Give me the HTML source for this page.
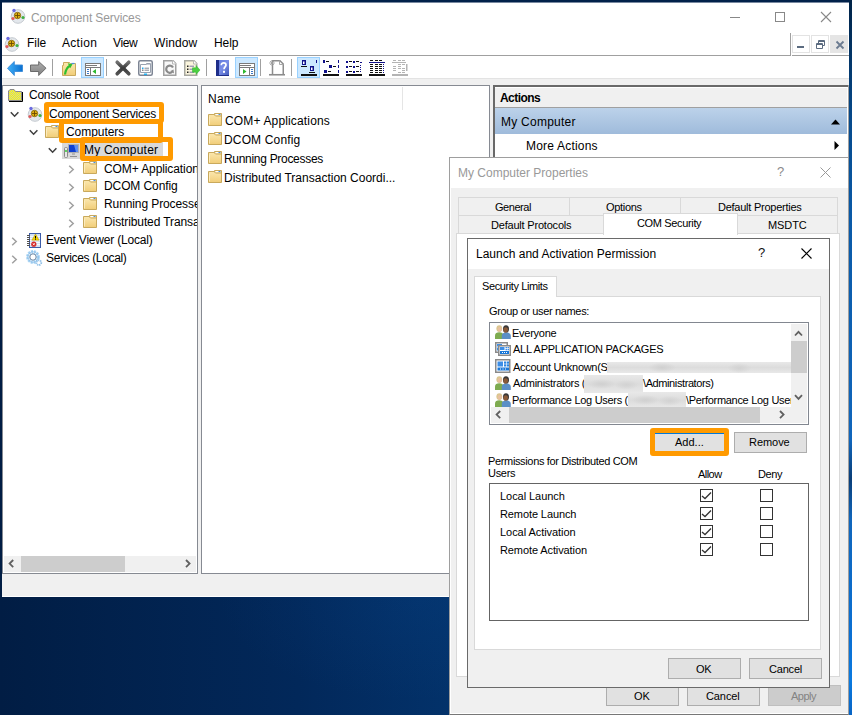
<!DOCTYPE html>
<html><head><meta charset="utf-8">
<style>
*{box-sizing:border-box}
html,body{margin:0;padding:0}
body{width:852px;height:715px;overflow:hidden;position:relative;background:radial-gradient(ellipse 200px 100px at 420px 600px,rgba(10,70,140,0.22),rgba(10,70,140,0)),linear-gradient(90deg,#011d44 0%,#02285a 35%,#03336c 55%,#04427f 100%);font-family:"Liberation Sans",sans-serif;}
.a{position:absolute}
.t{position:absolute;white-space:nowrap;font-size:12px;line-height:12px;color:#000}
.s{position:absolute;white-space:nowrap;font-size:11px;line-height:11px;color:#000}
.box{position:absolute;border:1px solid #828790;background:#fff}
.btn{position:absolute;border:1px solid #adadad;background:#e1e1e1}
.org{position:absolute;border:5px solid #ff9a00;border-radius:3px}
.cb{position:absolute;width:13px;height:13px;border:1px solid #333;background:#fff}
svg{position:absolute;overflow:visible}
.blur{background:radial-gradient(ellipse 14px 5px at 30% 50%,#d0d0d0,rgba(215,215,215,0)),radial-gradient(ellipse 12px 5px at 72% 55%,#d2d2d2,rgba(215,215,215,0)),linear-gradient(#e8e8e8,#dcdcdc 50%,#e8e8e8)}

</style></head><body>

<div class="a" style="left:849px;top:0;width:3px;height:715px;background:linear-gradient(#012347 0px,#02305e 40px,#064a8c 120px,#0a5aa8 220px,#1066bc 440px,#0a3e78 478px,#1066bc 520px,#0a70d4 640px,#0a7ae0 680px,#0864c4 715px)"></div>
<div class="a" style="left:0;top:0;width:849px;height:2px;background:#01214a"></div>
<!-- ============ MAIN WINDOW ============ -->
<div class="a" style="left:2px;top:2px;width:847px;height:1px;background:#7888a0"></div>
<div class="a" style="left:2px;top:3px;width:847px;height:594px;background:#fff"></div>
<!-- title -->
<div class="t" style="left:31px;top:12px;color:#999;letter-spacing:-0.1px">Component Services</div>
<!-- caption buttons -->
<div class="a" style="left:730px;top:17px;width:10px;height:1px;background:#888"></div>
<div class="a" style="left:775px;top:12px;width:10px;height:10px;border:1px solid #888"></div>
<svg style="left:821px;top:12px" width="10" height="10"><path d="M0 0L10 10M10 0L0 10" stroke="#888" stroke-width="1.1"/></svg>

<!-- menu -->
<div class="t" style="left:27px;top:37px;letter-spacing:-0.05px">File</div>
<div class="t" style="left:62px;top:37px;letter-spacing:0.3px">Action</div>
<div class="t" style="left:113px;top:37px;letter-spacing:-0.35px">View</div>
<div class="t" style="left:154px;top:37px;letter-spacing:0.1px">Window</div>
<div class="t" style="left:214px;top:37px;letter-spacing:-0.05px">Help</div>
<div class="a" style="left:2px;top:55px;width:789px;height:1px;background:#a0a0a0"></div>
<div class="a" style="left:790px;top:33px;width:1px;height:23px;background:#a0a0a0"></div>
<div class="a" style="left:792px;top:55px;width:57px;height:1px;background:#a0a0a0"></div>
<div class="a" style="left:792px;top:35px;width:18px;height:18px;border:1px solid #e3e3e3"></div>
<div class="a" style="left:811px;top:35px;width:18px;height:18px;border:1px solid #e3e3e3"></div>
<div class="a" style="left:830px;top:35px;width:18px;height:18px;background:#e5e5e5"></div>

<!-- toolbar band -->
<div class="a" style="left:2px;top:78px;width:847px;height:1px;background:#e3e3e3"></div>
<div class="a" style="left:2px;top:79px;width:847px;height:518px;background:#f0f0f0"></div>

<!-- tree pane -->
<div class="box" style="left:2px;top:85px;width:196px;height:489px;border-color:#868a92"></div>
<!-- list pane -->
<div class="box" style="left:201px;top:85px;width:289px;height:489px;border-color:#868a92"></div>
<!-- actions pane -->
<div class="a" style="left:493px;top:85px;width:356px;height:488px;background:#fff;border-top:2px solid #696969;border-left:2px solid #696969"></div>
<div class="a" style="left:495px;top:87px;width:352px;height:20px;background:#f0f0f0"></div>
<div class="a" style="left:495px;top:87px;width:352px;height:1px;background:#fff"></div>
<div class="a" style="left:495px;top:107px;width:352px;height:1px;background:#a0a0a0"></div>
<div class="a" style="left:495px;top:108px;width:352px;height:26px;background:linear-gradient(#bcd2ea,#9fbbdb)"></div>
<div class="a" style="left:847px;top:87px;width:1px;height:70px;background:#fff"></div>
<div class="a" style="left:848px;top:85px;width:1px;height:72px;background:#a0a0a0"></div>


<!-- symbols -->
<svg width="0" height="0" style="position:absolute">
<defs>
<linearGradient id="gFold" x1="0" y1="0" x2="0" y2="1"><stop offset="0" stop-color="#fbe7ae"/><stop offset="1" stop-color="#f1cd78"/></linearGradient>
<linearGradient id="gBlue" x1="0" y1="0" x2="1" y2="0"><stop offset="0" stop-color="#40b0f8"/><stop offset="1" stop-color="#0a6fd0"/></linearGradient>
<linearGradient id="gGray" x1="0" y1="0" x2="0" y2="1"><stop offset="0" stop-color="#b0b0b0"/><stop offset="1" stop-color="#808080"/></linearGradient>
<symbol id="folder" viewBox="0 0 14 13"><path d="M6.5 2.5V0.5H13.5V3" fill="#f6dc98" stroke="#c9a95c"/><path d="M7.5 1.5H12.5" stroke="#fff"/><path d="M10.5 1.5H12.5" stroke="#4a90e0"/><path d="M0.5 12.5V1.5H6L7.5 3H13.5V12.5Z" fill="url(#gFold)" stroke="#c9a95c"/><path d="M1.5 3.5V11.5" stroke="#fdf0c8" stroke-width="0.8"/></symbol>
<symbol id="comsvc" viewBox="0 0 16 16"><circle cx="8" cy="8.5" r="6.8" fill="#e3e7ec" stroke="#c4c9cf"/><circle cx="7.5" cy="7.5" r="3.2" fill="#e0b010" stroke="#7a5a00" stroke-width="0.8"/><path d="M7.5 5V10M5 7.5H10" stroke="#6b4a00" stroke-width="0.9"/><circle cx="4" cy="2.5" r="1.7" fill="#6a6ae0"/><circle cx="3" cy="10.5" r="1.6" fill="#e05a5a"/><circle cx="13" cy="9.5" r="1.6" fill="#40b040"/></symbol>
<symbol id="people" viewBox="0 0 16 14"><path d="M0 14V10.5C0 8.2 1.8 7.2 4.2 7.2S8.4 8.2 8.4 10.5V14Z" fill="#7eab50"/><ellipse cx="4.3" cy="3.6" rx="2.9" ry="3.4" fill="#dcc690"/><ellipse cx="4.8" cy="4.3" rx="2" ry="2.4" fill="#e8c0a0"/><path d="M6.8 14V10.8C6.8 8.6 8.6 7.6 11.3 7.6S15.8 8.6 15.8 10.8V14Z" fill="#5b8fc6"/><ellipse cx="11" cy="3.9" rx="3" ry="3.6" fill="#3a3838"/><ellipse cx="10.7" cy="4.9" rx="2.3" ry="2.6" fill="#8a5a38"/></symbol>
<symbol id="pkg" viewBox="0 0 16 14"><rect x="0.75" y="0.75" width="11.5" height="9.5" fill="#fff" stroke="#8a8a8a" stroke-width="1.5"/><rect x="2" y="2" width="5" height="2.5" fill="#3d8ee6"/><rect x="2" y="5.5" width="1" height="3" fill="#3d8ee6"/><rect x="3.75" y="3.75" width="11.5" height="9.5" fill="#fff" stroke="#8a8a8a" stroke-width="1.5"/><rect x="5" y="5" width="4.5" height="3" fill="#3d8ee6"/><rect x="10.5" y="5" width="1.5" height="1.3" fill="#3d8ee6"/><rect x="12.5" y="5" width="1.5" height="1.3" fill="#3d8ee6"/><rect x="10.5" y="7" width="1.5" height="1.3" fill="#3d8ee6"/><rect x="12.5" y="7" width="1.5" height="1.3" fill="#3d8ee6"/><rect x="5" y="9" width="9" height="3" fill="#1a78d8"/><path d="M7 10.5H8M9 10.5H10M11 10.5H12" stroke="#fff"/></symbol>
<symbol id="unk" viewBox="0 0 16 14"><rect x="0.75" y="0.75" width="14" height="12.5" fill="#fff" stroke="#8a8a8a" stroke-width="1.5"/><rect x="2.5" y="2.5" width="5.5" height="5" fill="#3d8ee6"/><rect x="9" y="2.5" width="2.2" height="2.2" fill="#2a84e0"/><rect x="11.8" y="2.5" width="2.2" height="2.2" fill="#2a84e0"/><rect x="9" y="5.3" width="2.2" height="2.2" fill="#2a84e0"/><rect x="11.8" y="5.3" width="2.2" height="2.2" fill="#2a84e0"/><rect x="2.5" y="8.5" width="11.5" height="3" fill="#1a78d8"/><path d="M5 10H6M7.5 10H8.5M10 10H11" stroke="#fff"/></symbol>
</defs></svg>

<!-- title icon / menu icon -->
<svg style="left:10px;top:8px" width="16" height="16"><use href="#comsvc"/></svg>
<svg style="left:4px;top:36px" width="16" height="16"><use href="#comsvc"/></svg>
<!-- mdi glyphs -->
<div class="a" style="left:797px;top:46px;width:7px;height:2px;background:#5b6b80"></div>
<svg style="left:816px;top:40px" width="9" height="9"><path d="M0.5 3.5H6.5V8.5H0.5ZM0.5 4.5H6.5M2.5 3.5V0.5H8.5V5.5H6.5M2.5 1.5H8.5" fill="none" stroke="#5b6b80"/></svg>
<svg style="left:836px;top:41px" width="8" height="8"><path d="M0.5 0.5L7.5 7.5M7.5 0.5L0.5 7.5" stroke="#6b7b90" stroke-width="1.8"/></svg>

<!-- toolbar -->
<svg style="left:7px;top:61px" width="17" height="16"><path d="M0.5 7.2L7.3 0.5V4H15.5V10.5H7.3V14.5Z" fill="url(#gBlue)" stroke="#3a8ad8" stroke-width="0.9"/></svg>
<svg style="left:30px;top:61px" width="17" height="16"><path d="M16 7.2L8.7 0.5V4H0.5V10.5H8.7V14.5Z" fill="url(#gGray)" stroke="#606060" stroke-width="0.9"/></svg>
<div class="a" style="left:52px;top:59px;width:1px;height:17px;background:#a0a0a0"></div>
<svg style="left:62px;top:61px" width="15" height="16"><path d="M0.5 4.5V14.5H13.5V2.5H8.5L7.5 1.5H1.5V4.5Z" fill="url(#gFold)" stroke="#c9a95c"/><path d="M9.5 2.5H12.5" stroke="#4a90e0" stroke-width="1.2"/><path d="M3 13.5C3.5 9 5 6.5 8 4.8" stroke="#2ec02e" stroke-width="2.2" fill="none"/><path d="M5.8 2.2L10.5 3.2L8.2 7.2Z" fill="#2ec02e"/></svg>
<div class="a" style="left:81px;top:57px;width:23px;height:21px;background:#cce8ff;border:1px solid #99d1ff"></div>
<svg style="left:85px;top:63px" width="16" height="13"><rect x="0.5" y="0.5" width="15" height="12" fill="#fff" stroke="#7a7a7a"/><path d="M1 2.5H12M1 4.5H15" stroke="#7a7a7a"/><path d="M5.5 5V12.5" stroke="#7a7a7a"/><path d="M2 6.5H4M2 8.5H4M2 10.5H4" stroke="#3a78c8" stroke-width="1.2"/><path d="M11 6L7.5 8.5L11 11Z" fill="#2eb82e"/></svg>
<div class="a" style="left:106px;top:59px;width:1px;height:17px;background:#a0a0a0"></div>
<svg style="left:114px;top:59px" width="18" height="18"><defs><linearGradient id="gX" x1="0" y1="0" x2="0" y2="1"><stop offset="0" stop-color="#707070"/><stop offset="0.5" stop-color="#3a3a3a"/><stop offset="1" stop-color="#505050"/></linearGradient></defs><path d="M3.2 3.2L14.8 14.8M14.8 3.2L3.2 14.8" stroke="url(#gX)" stroke-width="3.6" stroke-linecap="round"/></svg>
<svg style="left:138px;top:60px" width="16" height="16"><rect x="0.75" y="0.75" width="13.5" height="14.5" rx="1.5" fill="#fff" stroke="#7d8594" stroke-width="1.5"/><path d="M2.5 4.5H8.5V3.5H12.5V12.5H2.5Z" fill="#fff" stroke="#9aa2b0"/><rect x="9" y="4" width="3" height="1" fill="#c8ccd4"/><rect x="4" y="7.5" width="1.5" height="1.5" fill="#20a8f0"/><rect x="4" y="9.5" width="1.5" height="1.5" fill="#888"/><path d="M6.5 8.2H11M6.5 10.2H11" stroke="#808894"/><rect x="6" y="13.5" width="3" height="1.5" fill="#20b0f0"/></svg>
<svg style="left:163px;top:60px" width="14" height="16"><path d="M0.75 0.75H10L12.75 3.5V15.25H0.75Z" fill="#f8f8f8" stroke="#a0a0a0" stroke-width="1.5"/><path d="M9.5 0.5V4H13" fill="#fff" stroke="#b8b8b8"/><path d="M10 7.5A3.6 3.6 0 1 0 9.3 11.8" fill="none" stroke="#8a8a8a" stroke-width="2.2"/><path d="M7.5 11L11 13.5L10.5 9.5Z" fill="#8a8a8a"/></svg>
<svg style="left:184px;top:60px" width="17" height="16"><path d="M0.75 0.75H10L12.75 3.5V15.25H0.75Z" fill="#fbf5dc" stroke="#a8a8a0" stroke-width="1.5"/><path d="M9.5 0.5V4H13" fill="#fff" stroke="#b8b8b0"/><rect x="3" y="5.5" width="1.5" height="1.5" fill="#222"/><rect x="3" y="8.5" width="1.5" height="1.5" fill="#222"/><rect x="3" y="11.5" width="1.5" height="1.5" fill="#222"/><path d="M5.5 6.2H10M5.5 9.2H10M5.5 12.2H10" stroke="#7a78a8"/><path d="M8.5 7.8H12V5.5L16 10L12 14.5V12.2H8.5Z" fill="#4cd040" stroke="#30b030" stroke-width="0.5"/></svg>
<div class="a" style="left:206px;top:59px;width:1px;height:17px;background:#a0a0a0"></div>
<svg style="left:216px;top:60px" width="13" height="16"><defs><linearGradient id="gHelp" x1="0" y1="0" x2="1" y2="1"><stop offset="0" stop-color="#5a74d8"/><stop offset="0.5" stop-color="#7a8ee8"/><stop offset="1" stop-color="#4058b8"/></linearGradient></defs><rect x="0" y="0" width="13" height="16" fill="url(#gHelp)"/><rect x="0" y="0" width="3" height="16" fill="#1e2e8a"/><rect x="0" y="15" width="13" height="1" fill="#1e2e8a"/><path d="M5.3 5.2C5.3 3.6 6.4 2.8 7.7 2.8S10 3.6 10 5C10 6.8 8 7 8 9.2" fill="none" stroke="#fff" stroke-width="1.7"/><rect x="7" y="10.8" width="2" height="2" fill="#fff"/></svg>
<div class="a" style="left:235px;top:57px;width:23px;height:21px;background:#cce8ff;border:1px solid #99d1ff"></div>
<svg style="left:239px;top:63px" width="16" height="13"><rect x="0.5" y="0.5" width="15" height="12" fill="#fff" stroke="#7a7a7a"/><path d="M1 2.5H12M1 4.5H15" stroke="#7a7a7a"/><path d="M10.5 5V12.5" stroke="#7a7a7a"/><path d="M12 6.5H14M12 8.5H14M12 10.5H14" stroke="#3a78c8" stroke-width="1.2"/><path d="M4 6L7.5 8.5L4 11Z" fill="#2eb82e"/></svg>
<div class="a" style="left:260px;top:59px;width:1px;height:17px;background:#a0a0a0"></div>
<svg style="left:269px;top:60px" width="17" height="16"><path d="M3.5 14V0.75H11L14.25 4V14" fill="#fff" stroke="#8c8c8c" stroke-width="1.5"/><path d="M10.5 0.5V4.5H14.5" fill="none" stroke="#a8a8a8"/><path d="M0 14.75H16" stroke="#8c8c8c" stroke-width="1.6"/><path d="M1 1L5 5M5 1L1 5M3 0V6M0 3H6" stroke="#a0a0a0" stroke-width="0.8"/></svg>
<div class="a" style="left:291px;top:59px;width:1px;height:17px;background:#a0a0a0"></div>
<div class="a" style="left:297px;top:57px;width:23px;height:21px;background:#cce8ff;border:1px solid #99d1ff"></div>
<svg style="left:301px;top:60px" width="16" height="16"><rect x="1" y="0" width="4" height="5" fill="#10108a"/><rect x="2" y="1.5" width="1.5" height="2.5" fill="#fff"/><rect x="0" y="6" width="6" height="1" fill="#111"/><rect x="9" y="6" width="4" height="5" fill="#10108a"/><rect x="10" y="7.5" width="1.5" height="2.5" fill="#fff"/><rect x="8" y="12" width="6" height="1" fill="#111"/><rect x="15" y="0" width="1" height="3" fill="#10108a"/><rect x="0" y="14" width="16" height="2" fill="#111"/></svg>
<svg style="left:323px;top:60px" width="16" height="16"><g fill="#10108a"><rect x="0" y="0" width="2" height="3"/><rect x="6" y="5" width="3" height="3"/><rect x="1" y="10" width="3" height="3"/><rect x="15" y="0" width="1" height="3"/><rect x="15" y="5" width="1" height="3"/><rect x="15" y="10" width="1" height="3"/></g><g fill="#111"><rect x="3" y="1" width="3" height="1"/><rect x="10" y="6" width="3" height="1"/><rect x="5" y="11" width="3" height="1"/><rect x="0" y="14" width="16" height="2"/></g></svg>
<svg style="left:346px;top:60px" width="16" height="16"><g fill="#10108a"><rect x="0" y="1" width="2" height="2"/><rect x="7" y="1" width="2" height="2"/><rect x="0" y="6" width="2" height="2"/><rect x="7" y="6" width="2" height="2"/><rect x="0" y="11" width="2" height="2"/><rect x="7" y="11" width="2" height="2"/><rect x="14" y="2" width="2" height="1"/><rect x="14" y="5" width="1" height="1"/><rect x="14" y="7" width="1" height="1"/><rect x="14" y="9" width="1" height="1"/><rect x="14" y="11" width="1" height="1"/></g><g fill="#111"><rect x="3" y="1" width="3" height="1"/><rect x="10" y="1" width="3" height="1"/><rect x="3" y="6" width="3" height="1"/><rect x="10" y="6" width="3" height="1"/><rect x="3" y="11" width="3" height="1"/><rect x="10" y="11" width="3" height="1"/><rect x="0" y="14" width="16" height="2"/></g></svg>
<svg style="left:369px;top:60px" width="16" height="16"><g fill="#111"><rect x="1" y="0" width="3" height="1"/><rect x="6" y="0" width="3" height="1"/><rect x="10" y="0" width="3" height="1"/><rect x="1" y="4" width="3" height="1"/><rect x="6" y="4" width="3" height="1"/><rect x="10" y="4" width="3" height="1"/><rect x="1" y="6" width="3" height="1"/><rect x="6" y="6" width="3" height="1"/><rect x="10" y="6" width="3" height="1"/><rect x="1" y="8" width="3" height="1"/><rect x="6" y="8" width="3" height="1"/><rect x="10" y="8" width="3" height="1"/><rect x="1" y="10" width="3" height="1"/><rect x="6" y="10" width="3" height="1"/><rect x="10" y="10" width="3" height="1"/><rect x="1" y="12" width="3" height="1"/><rect x="6" y="12" width="3" height="1"/><rect x="10" y="12" width="3" height="1"/><rect x="0" y="14" width="16" height="2"/></g><g fill="#10108a"><rect x="0" y="2" width="16" height="1"/><rect x="14" y="4" width="1" height="1"/><rect x="14" y="6" width="1" height="1"/><rect x="14" y="8" width="1" height="1"/><rect x="14" y="10" width="1" height="1"/><rect x="14" y="12" width="1" height="1"/></g></svg>
<svg style="left:392px;top:60px" width="16" height="16"><g fill="#b4b4b4"><rect x="1" y="0" width="3" height="1"/><rect x="6" y="0" width="3" height="1"/><rect x="10" y="0" width="3" height="1"/><rect x="0" y="2" width="14" height="1"/><rect x="6" y="4" width="3" height="1"/><rect x="10" y="4" width="3" height="1"/><rect x="1" y="6" width="3" height="1"/><rect x="6" y="6" width="3" height="1"/><rect x="1" y="8" width="3" height="1"/><rect x="6" y="8" width="3" height="1"/><rect x="10" y="8" width="3" height="1"/><rect x="1" y="10" width="3" height="1"/><rect x="10" y="10" width="3" height="1"/><rect x="6" y="12" width="3" height="1"/><rect x="10" y="12" width="3" height="1"/><rect x="14" y="4" width="1.5" height="7"/><rect x="0" y="14" width="16" height="2"/></g></svg>

<div class="a" style="left:3px;top:86px;width:194px;height:486px;overflow:hidden"><div class="a" style="left:-3px;top:-86px;width:852px;height:715px">
<!-- tree content -->
<svg style="left:8px;top:89px" width="15" height="13"><defs><pattern id="pDot" width="2" height="2" patternUnits="userSpaceOnUse"><rect width="2" height="2" fill="#ffff00"/><rect x="1" y="0" width="1" height="1" fill="#c8c8a8"/><rect x="0" y="1" width="1" height="1" fill="#c8c8a8"/></pattern></defs><path d="M0.5 11.5V2L2 0.5H6L7.5 2.5H13.5V11.5Z" fill="url(#pDot)" stroke="#8a8a8a"/><path d="M14.5 3V12.5H1" stroke="#000" fill="none"/></svg>
<div class="t" style="left:29px;top:89px;letter-spacing:-0.25px">Console Root</div>

<svg style="left:10px;top:111px" width="10" height="7"><path d="M0.8 1.2L4.6 5.2L8.4 1.2" stroke="#404040" stroke-width="1.5" fill="none"/></svg>
<svg style="left:27px;top:106px" width="16" height="16"><use href="#comsvc"/></svg>
<div class="t" style="left:49px;top:108px;letter-spacing:-0.25px">Component Services</div>

<svg style="left:29px;top:129px" width="10" height="7"><path d="M0.8 1.2L4.6 5.2L8.4 1.2" stroke="#404040" stroke-width="1.5" fill="none"/></svg>
<svg style="left:45px;top:125px" width="14" height="13"><use href="#folder"/></svg>
<div class="t" style="left:66px;top:126px;letter-spacing:-0.05px">Computers</div>

<div class="a" style="left:62px;top:142px;width:101px;height:17px;background:#d9d9d9"></div>
<svg style="left:48px;top:147px" width="10" height="7"><path d="M0.8 1.2L4.6 5.2L8.4 1.2" stroke="#404040" stroke-width="1.5" fill="none"/></svg>
<svg style="left:63px;top:144px" width="17" height="14"><rect x="1.5" y="3.5" width="3" height="10" rx="1" fill="#e8e8e8" stroke="#8a8a8a"/><path d="M3 6V8" stroke="#30d030" stroke-width="1.5"/><rect x="5.5" y="0.5" width="10" height="8" fill="#1040d0" stroke="#b0b0b0"/><path d="M11 1H15V8L13 8Z" fill="#80b0ff" opacity="0.7"/><path d="M9 10H12M7 12.5H14" stroke="#909090"/></svg>
<div class="t" style="left:84px;top:144px;letter-spacing:0.2px">My Computer</div>

<svg style="left:68px;top:165px" width="7" height="9"><path d="M1.2 0.8L5.2 4.5L1.2 8.2" stroke="#a0a0a0" stroke-width="1.5" fill="none"/></svg>
<svg style="left:83px;top:161px" width="14" height="13"><use href="#folder"/></svg>
<div class="t" style="left:104px;top:163px;letter-spacing:-0.1px">COM+ Applications</div>
<svg style="left:68px;top:183px" width="7" height="9"><path d="M1.2 0.8L5.2 4.5L1.2 8.2" stroke="#a0a0a0" stroke-width="1.5" fill="none"/></svg>
<svg style="left:83px;top:179px" width="14" height="13"><use href="#folder"/></svg>
<div class="t" style="left:104px;top:180px;letter-spacing:-0.1px">DCOM Config</div>
<svg style="left:68px;top:201px" width="7" height="9"><path d="M1.2 0.8L5.2 4.5L1.2 8.2" stroke="#a0a0a0" stroke-width="1.5" fill="none"/></svg>
<svg style="left:83px;top:197px" width="14" height="13"><use href="#folder"/></svg>
<div class="t" style="left:104px;top:198px;letter-spacing:-0.1px">Running Processes</div>
<svg style="left:68px;top:219px" width="7" height="9"><path d="M1.2 0.8L5.2 4.5L1.2 8.2" stroke="#a0a0a0" stroke-width="1.5" fill="none"/></svg>
<svg style="left:83px;top:215px" width="14" height="13"><use href="#folder"/></svg>
<div class="t" style="left:104px;top:216px;letter-spacing:-0.1px">Distributed Transaction Coordinator</div>

<svg style="left:11px;top:237px" width="7" height="9"><path d="M1.2 0.8L5.2 4.5L1.2 8.2" stroke="#a0a0a0" stroke-width="1.5" fill="none"/></svg>
<svg style="left:27px;top:233px" width="14" height="15"><rect x="2.5" y="0.5" width="11" height="14" fill="#d4e2f4" stroke="#3c5ba8"/><path d="M3 3.5H13M3 5.5H13M3 7.5H13M3 9.5H13M3 11.5H13" stroke="#fff" stroke-width="0.8"/><path d="M0 2.5H3M0 4.5H3M0 6.5H3M0 8.5H3M0 10.5H3M0 12.5H3" stroke="#505050" stroke-width="1"/><path d="M8.5 1L12.2 7.2H4.8Z" fill="#f4d400" stroke="#a88a00" stroke-width="0.5"/><path d="M8.5 3V5.5M8.5 6.2V6.8" stroke="#000" stroke-width="1"/><circle cx="6.8" cy="11.2" r="2.6" fill="#d42828"/><path d="M5.8 10.2L7.8 12.2M7.8 10.2L5.8 12.2" stroke="#fff" stroke-width="0.8"/></svg>
<div class="t" style="left:46px;top:234px;letter-spacing:-0.2px">Event Viewer (Local)</div>
<svg style="left:11px;top:255px" width="7" height="9"><path d="M1.2 0.8L5.2 4.5L1.2 8.2" stroke="#a0a0a0" stroke-width="1.5" fill="none"/></svg>
<svg style="left:26px;top:250px" width="17" height="17"><circle cx="7" cy="7" r="5.2" fill="none" stroke="#a8d4f4" stroke-width="3.4" stroke-dasharray="1.9 0.85"/><circle cx="7" cy="7" r="5.3" fill="none" stroke="#7ab0e0" stroke-width="0.6"/><circle cx="7" cy="7" r="3.2" fill="#fff" stroke="#5a7898" stroke-width="0.9"/><circle cx="12.8" cy="12.6" r="2.4" fill="#fff" stroke="#90c0e8" stroke-width="2" stroke-dasharray="1.2 0.7"/></svg>
<div class="t" style="left:46px;top:252px;letter-spacing:-0.35px">Services (Local)</div>
</div></div>
<!-- tree clip overlay right side -->

<!-- orange boxes -->
<div class="org" style="left:44px;top:102px;width:120px;height:21px;border-bottom-width:4px"></div>
<div class="org" style="left:59px;top:120px;width:104px;height:23px;border-top-width:4px"></div>
<div class="org" style="left:80px;top:137px;width:93px;height:24px"></div>

<!-- tree scrollbar -->
<div class="a" style="left:4px;top:556px;width:192px;height:16px;background:#f0f0f0"></div>
<div class="a" style="left:21px;top:556px;width:104px;height:16px;background:#cdcdcd"></div>
<svg style="left:8px;top:559px" width="7" height="10"><path d="M5.2 1L1.6 4.6L5.2 8.2" stroke="#606060" stroke-width="1.8" fill="none"/></svg>
<svg style="left:185px;top:559px" width="7" height="10"><path d="M1 1L4.6 4.6L1 8.2" stroke="#606060" stroke-width="1.8" fill="none"/></svg>

<!-- list pane -->
<div class="t" style="left:208px;top:93px;letter-spacing:0.25px">Name</div>
<div class="a" style="left:402px;top:87px;width:1px;height:23px;background:#e5e5e5"></div>
<svg style="left:208px;top:113px" width="14" height="13"><use href="#folder"/></svg>
<div class="t" style="left:225px;top:115px;letter-spacing:0.15px">COM+ Applications</div>
<svg style="left:208px;top:132px" width="14" height="13"><use href="#folder"/></svg>
<div class="t" style="left:224px;top:134px;letter-spacing:0.15px">DCOM Config</div>
<svg style="left:208px;top:151px" width="14" height="13"><use href="#folder"/></svg>
<div class="t" style="left:224px;top:153px;letter-spacing:-0.3px">Running Processes</div>
<svg style="left:208px;top:170px" width="14" height="13"><use href="#folder"/></svg>
<div class="t" style="left:224px;top:172px">Distributed Transaction Coordi...</div>

<!-- actions -->
<div class="t" style="left:500px;top:92px;font-weight:bold;letter-spacing:-0.55px">Actions</div>
<div class="t" style="left:501px;top:116px;letter-spacing:0.25px">My Computer</div>
<svg style="left:831px;top:119px" width="10" height="6"><path d="M0 5.5L4.5 0.5L9 5.5Z" fill="#000"/></svg>
<div class="t" style="left:526px;top:140px;letter-spacing:0.2px">More Actions</div>
<svg style="left:834px;top:141px" width="6" height="10"><path d="M0.5 0L5 4.5L0.5 9Z" fill="#000"/></svg>

<!-- status bar -->

<!-- status bar highlight -->
<div class="a" style="left:2px;top:596px;width:847px;height:1px;background:#fff"></div>

<!-- ============ DIALOG 1 ============ -->
<div class="a" style="left:449px;top:157px;width:400px;height:558px;background:#f0f0f0;border:1px solid rgba(60,60,60,0.45);border-bottom-color:rgba(0,0,0,0.5)"></div>
<div class="a" style="left:450px;top:158px;width:1px;height:556px;background:#fff"></div>
<div class="a" style="left:450px;top:713px;width:398px;height:1px;background:#fff"></div>
<div class="a" style="left:450px;top:158px;width:398px;height:30px;background:#fff"></div>
<div class="t" style="left:458px;top:167px;color:#999">My Computer Properties</div>
<div class="t" style="left:777px;top:166px;color:#8a8a8a;font-size:13px">?</div>
<svg style="left:820px;top:167px" width="11" height="11"><path d="M0.5 0.5L10.5 10.5M10.5 0.5L0.5 10.5" stroke="#999" stroke-width="1"/></svg>

<!-- tabs -->
<div class="a" style="left:458px;top:197px;width:380px;height:37px;background:#f0f0f0;border:1px solid #d9d9d9"></div>
<div class="a" style="left:458px;top:215px;width:380px;height:1px;background:#d9d9d9"></div>
<div class="a" style="left:569px;top:197px;width:1px;height:18px;background:#d9d9d9"></div>
<div class="a" style="left:680px;top:197px;width:1px;height:18px;background:#d9d9d9"></div>
<div class="a" style="left:603px;top:215px;width:1px;height:18px;background:#d9d9d9"></div>
<div class="a" style="left:737px;top:215px;width:1px;height:18px;background:#d9d9d9"></div>
<!-- tab panel -->
<div class="a" style="left:456px;top:233px;width:384px;height:444px;background:#fff;border:1px solid #d9d9d9"></div>
<!-- selected tab -->
<div class="a" style="left:603px;top:213px;width:135px;height:22px;background:#fff;border:1px solid #d9d9d9;border-bottom:none"></div>
<div class="s tb" style="left:495px;top:202px;letter-spacing:-0.45px">General</div>
<div class="s tb" style="left:606px;top:202px;letter-spacing:-0.3px">Options</div>
<div class="s tb" style="left:718px;top:202px;letter-spacing:-0.25px">Default Properties</div>
<div class="s tb" style="left:491px;top:220px;letter-spacing:-0.2px">Default Protocols</div>
<div class="s tb" style="left:637px;top:218px;letter-spacing:-0.35px">COM Security</div>
<div class="s tb" style="left:768px;top:220px;letter-spacing:-0.1px">MSDTC</div>

<!-- outer buttons -->
<div class="btn" style="left:606px;top:685px;width:73px;height:21px"></div>
<div class="btn" style="left:687px;top:685px;width:73px;height:21px"></div>
<div class="btn" style="left:768px;top:685px;width:73px;height:21px;background:#cccccc;border-color:#bfbfbf"></div>
<div class="s" style="left:634px;top:691px;letter-spacing:-0.1px">OK</div>
<div class="s" style="left:706px;top:691px;letter-spacing:-0.1px">Cancel</div>
<div class="s" style="left:791px;top:691px;color:#838383;letter-spacing:-0.5px">Apply</div>

<!-- ============ DIALOG 2 ============ -->
<div class="a" style="left:467px;top:238px;width:363px;height:450px;background:#f0f0f0;border:1px solid #6a6a6a"></div>
<div class="a" style="left:468px;top:239px;width:361px;height:30px;background:#fff"></div>
<div class="t" style="left:476px;top:248px">Launch and Activation Permission</div>
<div class="t" style="left:758px;top:247px;font-size:13px;color:#111">?</div>
<svg style="left:801px;top:248px" width="11" height="11"><path d="M0.5 0.5L10.5 10.5M10.5 0.5L0.5 10.5" stroke="#000" stroke-width="1.1"/></svg>

<!-- security limits tab + panel -->
<div class="a" style="left:474px;top:296px;width:347px;height:354px;background:#fff;border:1px solid #d9d9d9"></div>
<div class="a" style="left:474px;top:276px;width:83px;height:21px;background:#fff;border:1px solid #d9d9d9;border-bottom:none"></div>
<div class="s" style="left:482px;top:281px;letter-spacing:-0.4px">Security Limits</div>
<div class="s" style="left:489px;top:306px;letter-spacing:-0.35px">Group or user names:</div>

<!-- user list -->
<div class="box" style="left:489px;top:322px;width:320px;height:103px;border-color:#828790;overflow:hidden">
 <div class="a" style="left:1px;top:1px;width:300px;height:83px;overflow:hidden">
  <svg style="left:4px;top:1px" width="16" height="14"><use href="#people"/></svg>
  <div class="s" style="left:21px;top:4px;letter-spacing:-0.25px">Everyone</div>
  <svg style="left:4px;top:18px" width="16" height="14"><use href="#pkg"/></svg>
  <div class="s" style="left:22px;top:20px;letter-spacing:-0.25px">ALL APPLICATION PACKAGES</div>
  <svg style="left:4px;top:35px" width="16" height="14"><use href="#unk"/></svg>
  <div class="s" style="left:22px;top:38px;letter-spacing:-0.3px">Account Unknown(S</div>
  <div class="a blur" style="left:116px;top:38px;width:184px;height:11px"></div>
  <svg style="left:4px;top:52px" width="16" height="14"><use href="#people"/></svg>
  <div class="s" style="left:22px;top:54px;letter-spacing:-0.3px">Administrators (</div>
  <div class="a blur" style="left:93px;top:51px;width:59px;height:18px"></div>
  <div class="s" style="left:152px;top:54px;letter-spacing:-0.4px">\Administrators)</div>
  <svg style="left:4px;top:69px" width="16" height="14"><use href="#people"/></svg>
  <div class="s" style="left:21px;top:71px;letter-spacing:-0.3px">Performance Log Users (</div>
  <div class="a blur" style="left:137px;top:68px;width:58px;height:16px"></div>
  <div class="s" style="left:195px;top:71px;letter-spacing:-0.3px">\Performance Log Users</div>
 </div>
 <!-- v scrollbar -->
 <div class="a" style="left:301px;top:1px;width:16px;height:99px;background:#f0f0f0"></div>
 <div class="a" style="left:301px;top:18px;width:16px;height:32px;background:#cdcdcd"></div>
 <svg style="left:304px;top:7px" width="9" height="7"><path d="M1 5.5L4.5 1.8L8 5.5" stroke="#606060" stroke-width="1.8" fill="none"/></svg>
 <svg style="left:304px;top:71px" width="9" height="7"><path d="M1 1.2L4.5 4.9L8 1.2" stroke="#606060" stroke-width="1.8" fill="none"/></svg>
 <!-- h scrollbar -->
 <div class="a" style="left:1px;top:84px;width:300px;height:16px;background:#f0f0f0"></div>
 <div class="a" style="left:19px;top:84px;width:251px;height:16px;background:#cdcdcd"></div>
 <svg style="left:5px;top:87px" width="7" height="10"><path d="M5.2 1L1.6 4.6L5.2 8.2" stroke="#606060" stroke-width="1.8" fill="none"/></svg>
 <svg style="left:289px;top:87px" width="7" height="10"><path d="M1 1L4.6 4.6L1 8.2" stroke="#606060" stroke-width="1.8" fill="none"/></svg>
</div>

<!-- add/remove -->
<div class="btn" style="left:654px;top:433px;width:73px;height:21px;border-color:#0078d7"></div>
<div class="s" style="left:675px;top:437px">Add...</div>
<div class="btn" style="left:734px;top:432px;width:73px;height:21px"></div>
<div class="s" style="left:749px;top:437px;letter-spacing:-0.05px">Remove</div>
<div class="org" style="left:650px;top:428px;width:79px;height:28px"></div>

<div class="s" style="left:488px;top:456px;letter-spacing:-0.35px">Permissions for Distributed COM</div>
<div class="s" style="left:488px;top:468px;letter-spacing:-0.3px">Users</div>
<div class="s" style="left:698px;top:469px;letter-spacing:-0.55px">Allow</div>
<div class="s" style="left:758px;top:469px;letter-spacing:-0.4px">Deny</div>

<div class="box" style="left:489px;top:483px;width:320px;height:138px;border-color:#646464"></div>
<div class="s" style="left:500px;top:491px;letter-spacing:-0.05px">Local Launch</div>
<div class="s" style="left:500px;top:509px;letter-spacing:-0.1px">Remote Launch</div>
<div class="s" style="left:500px;top:527px;letter-spacing:-0.05px">Local Activation</div>
<div class="s" style="left:500px;top:545px;letter-spacing:-0.1px">Remote Activation</div>
<div class="cb" style="left:700px;top:489px"><svg style="left:0;top:0" width="11" height="11"><path d="M1 6L4 8.5L10 2.5" stroke="#333" stroke-width="1.3" fill="none"/></svg></div>
<div class="cb" style="left:700px;top:507px"><svg style="left:0;top:0" width="11" height="11"><path d="M1 6L4 8.5L10 2.5" stroke="#333" stroke-width="1.3" fill="none"/></svg></div>
<div class="cb" style="left:700px;top:525px"><svg style="left:0;top:0" width="11" height="11"><path d="M1 6L4 8.5L10 2.5" stroke="#333" stroke-width="1.3" fill="none"/></svg></div>
<div class="cb" style="left:700px;top:543px"><svg style="left:0;top:0" width="11" height="11"><path d="M1 6L4 8.5L10 2.5" stroke="#333" stroke-width="1.3" fill="none"/></svg></div>
<div class="cb" style="left:760px;top:489px"></div>
<div class="cb" style="left:760px;top:507px"></div>
<div class="cb" style="left:760px;top:525px"></div>
<div class="cb" style="left:760px;top:543px"></div>

<div class="btn" style="left:668px;top:658px;width:73px;height:21px"></div>
<div class="btn" style="left:749px;top:658px;width:73px;height:21px"></div>
<div class="s" style="left:696px;top:664px;letter-spacing:-0.2px">OK</div>
<div class="s" style="left:769px;top:664px;letter-spacing:-0.2px">Cancel</div>

</body></html>
